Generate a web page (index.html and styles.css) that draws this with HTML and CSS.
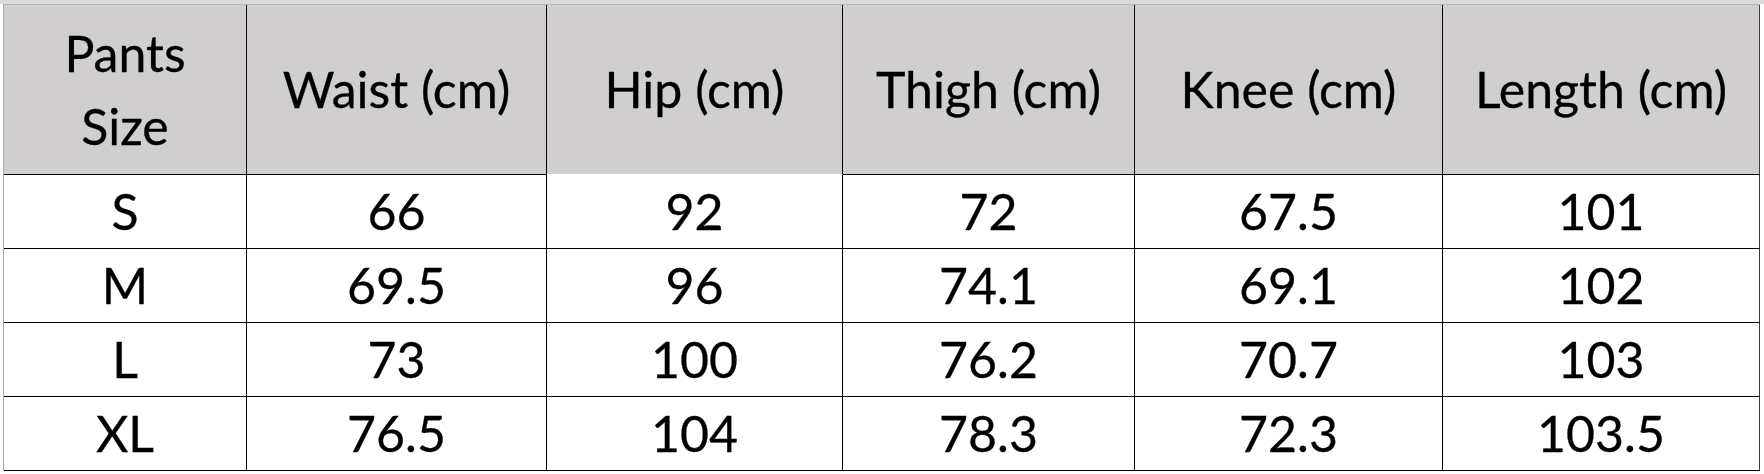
FILE: index.html
```html
<!DOCTYPE html>
<html>
<head>
<meta charset="utf-8">
<link rel="stylesheet" href="styles.css">
</head>
<body>
<div class="topstrip"></div>
<div class="sheet">
  <div class="cell head">Pants<br>Size</div>
  <div class="cell head">Waist (cm)</div>
  <div class="cell head open">Hip (cm)</div>
  <div class="cell head">Thigh (cm)</div>
  <div class="cell head">Knee (cm)</div>
  <div class="cell head last">Length (cm)</div>

  <div class="cell">S</div>
  <div class="cell">66</div>
  <div class="cell">92</div>
  <div class="cell">72</div>
  <div class="cell">67.5</div>
  <div class="cell last">101</div>

  <div class="cell">M</div>
  <div class="cell">69.5</div>
  <div class="cell">96</div>
  <div class="cell">74.1</div>
  <div class="cell">69.1</div>
  <div class="cell last">102</div>

  <div class="cell">L</div>
  <div class="cell">73</div>
  <div class="cell">100</div>
  <div class="cell">76.2</div>
  <div class="cell">70.7</div>
  <div class="cell last">103</div>

  <div class="cell">XL</div>
  <div class="cell">76.5</div>
  <div class="cell">104</div>
  <div class="cell">78.3</div>
  <div class="cell">72.3</div>
  <div class="cell last">103.5</div>
</div>
</body>
</html>
```
FILE: styles.css
```css
html, body {
  margin: 0;
  padding: 0;
  background: #ffffff;
}
body {
  font-family: "Lato", "Open Sans", sans-serif;
  color: #000;
  width: 1764px;
  height: 474px;
  overflow: hidden;
}
.topstrip {
  height: 4px;
  background: #dcdada;
}
.sheet {
  margin-left: 3px;
  display: grid;
  grid-template-columns: 243px 300px 296px 292px 308px 317px;
  grid-template-rows: 170px 74px 74px 74px 74px;
  border-left: 1px solid #a8a8a8;
  border-top: 1px solid #b4b4b4;
  width: max-content;
}
.cell {
  box-sizing: border-box;
  border-right: 1px solid #000;
  border-bottom: 1px solid #000;
  display: flex;
  align-items: center;
  justify-content: center;
  text-align: center;
  font-size: 50px;
  line-height: 73px;
  -webkit-text-stroke: 0.3px #000;
}
.head {
  background: #d0cece;
}
.head.open {
  border-bottom-color: #ffffff;
}
.last {
  border-right-color: #3a3a3a;
}
```
